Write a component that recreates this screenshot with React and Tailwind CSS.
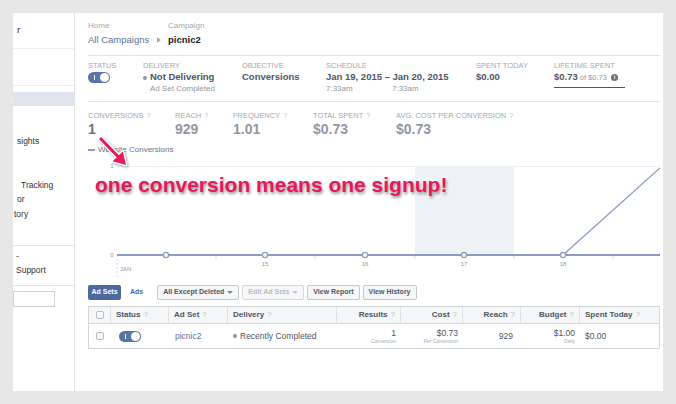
import React from "react";

function Toggle() {
  return (
    <div className="relative w-[22px] h-[11px] rounded-full bg-[#5b74a8]">
      <div className="absolute left-[6px] top-[3px] w-[1px] h-[5px] bg-white" />
      <div className="absolute right-[1px] top-[1px] w-[9px] h-[9px] rounded-full bg-white" />
    </div>
  );
}

function Q() {
  return <span className="text-[#bcc0c7] font-normal ml-[3px]">?</span>;
}

function Label({ children }) {
  return <div className="text-[7.5px] leading-[10px] text-[#a4a9b3] whitespace-nowrap">{children}</div>;
}

function Sidebar() {
  return (
    <div className="w-[62px] shrink-0 border-r border-[#e3e3e3] flex flex-col text-[8.5px] text-[#333] overflow-hidden">
      <div className="h-[36px] flex items-center pl-[4px] border-b border-[#eeeeee] text-[9.5px]">r</div>
      <div className="h-[37px] border-b border-[#eeeeee]" />
      <div className="mt-[6px] h-[14px] bg-[#dfe4ee]" />
      <div className="mt-[29px] leading-[12px] pl-[4px]">sights</div>
      <div className="mt-[32px] leading-[12px] pl-[8px]">Tracking</div>
      <div className="mt-[2px] leading-[12px] pl-[4px]">or</div>
      <div className="mt-[3px] leading-[12px] pl-[1px]">tory</div>
      <div className="mt-[25px] border-t border-[#e5e5e5]" />
      <div className="mt-[4px] leading-[12px] pl-[3px]">-</div>
      <div className="mt-[2px] leading-[12px] pl-[3px]">Support</div>
      <div className="mt-[9px] border-t border-[#e5e5e5]" />
      <div className="mt-[5px] h-[16px] w-[42px] border border-[#cfd2d6] bg-white" />
    </div>
  );
}

function Chart() {
  const pts = [78, 177, 277, 376, 475];
  const ticks = [128, 227, 327, 426, 525];
  return (
    <svg width="572" height="120" className="block">
      <line x1="29" y1="8.5" x2="572" y2="8.5" stroke="#eceef1" strokeWidth="1" />
      <rect x="327" y="8" width="99" height="89" fill="#eef1f6" />
      <text x="24" y="10" fontSize="6" fill="#9197a3" textAnchor="middle" fontFamily="Liberation Sans, Arial, sans-serif">1</text>
      <text x="24" y="99" fontSize="6" fill="#9197a3" textAnchor="middle" fontFamily="Liberation Sans, Arial, sans-serif">0</text>
      {ticks.map((t) => (
        <line key={t} x1={t} y1="97" x2={t} y2="101" stroke="#d5d9e0" strokeWidth="1" />
      ))}
      <line x1="29" y1="97" x2="29" y2="120" stroke="#d5d9e0" strokeWidth="1" strokeDasharray="2 2" />
      <line x1="29" y1="97" x2="572" y2="97" stroke="#8b9dc3" strokeWidth="2" />
      <line x1="475" y1="97" x2="572" y2="10" stroke="#8b9dc3" strokeWidth="1.3" />
      {pts.map((p) => (
        <circle key={p} cx={p} cy="97" r="2.6" fill="white" stroke="#8b9dc3" strokeWidth="1.3" />
      ))}
      {[["15", 177], ["16", 277], ["17", 376], ["18", 475]].map(([l, x]) => (
        <text key={l} x={x} y="108" fontSize="6" fill="#9197a3" textAnchor="middle" fontFamily="Liberation Sans, Arial, sans-serif">{l}</text>
      ))}
      <text x="32" y="113" fontSize="6" fill="#9197a3" fontFamily="Liberation Sans, Arial, sans-serif">JAN</text>
    </svg>
  );
}

function Btn({ children, disabled }) {
  return (
    <div
      className={
        disabled
          ? "h-[15px] px-[5px] flex items-center border border-[#d6d8dc] bg-[#f6f7f8] rounded-[2px] text-[7px] font-bold text-[#b9bcc2] whitespace-nowrap"
          : "h-[15px] px-[5px] flex items-center border border-[#c4c7cc] bg-[#f6f7f8] rounded-[2px] text-[7px] font-bold text-[#4e5665] whitespace-nowrap"
      }
    >
      {children}
    </div>
  );
}

function Caret({ light }) {
  return (
    <span className={light ? "ml-[3px] inline-block w-0 h-0 border-l-[3px] border-r-[3px] border-t-[3px] border-l-transparent border-r-transparent border-t-[#c5c8cd]" : "ml-[3px] inline-block w-0 h-0 border-l-[3px] border-r-[3px] border-t-[3px] border-l-transparent border-r-transparent border-t-[#7f8590]"} />
  );
}

function Table() {
  const head = "h-[16px] flex items-center px-[5px] border-r border-[#dddfe2] text-[8px] font-bold text-[#4e5665] whitespace-nowrap";
  const cell = "h-[24px] flex items-center px-[5px] text-[8.5px] text-[#4e5665] whitespace-nowrap";
  return (
    <div className="mt-[6px] border border-[#d3d6db]">
      <div className="grid grid-cols-[22px_58px_59px_109px_64px_62px_58px_59px_1fr] bg-[#f6f7f8] border-b border-[#d3d6db]">
        <div className={head + " justify-center"}>
          <div className="w-[8px] h-[8px] rounded-[2px] border border-[#b9bcc2] bg-white" />
        </div>
        <div className={head}>Status<Q /></div>
        <div className={head}>Ad Set<Q /></div>
        <div className={head}>Delivery<Q /></div>
        <div className={head + " justify-end"}>Results<Q /></div>
        <div className={head + " justify-end"}>Cost<Q /></div>
        <div className={head + " justify-end"}>Reach<Q /></div>
        <div className={head + " justify-end"}>Budget<Q /></div>
        <div className={head + " border-r-0"}>Spent Today<Q /></div>
      </div>
      <div className="grid grid-cols-[22px_58px_59px_109px_64px_62px_58px_59px_1fr] bg-white">
        <div className={cell + " justify-center"}>
          <div className="w-[8px] h-[8px] rounded-[2px] border border-[#b9bcc2] bg-[#f1f2f4]" />
        </div>
        <div className={cell + " pl-[8px]"}><Toggle /></div>
        <div className={cell + " pl-[6px] text-[#5b6f9c]"}>picnic2</div>
        <div className={cell}>
          <span className="w-[4px] h-[4px] rounded-full bg-[#90949c] mr-[3px]" />
          Recently Completed
        </div>
        <div className={cell + " flex-col items-end justify-center"}>
          <div className="leading-[10px]">1</div>
          <div className="text-[5px] leading-[7px] text-[#a4a9b3]">Conversion</div>
        </div>
        <div className={cell + " flex-col items-end justify-center"}>
          <div className="leading-[10px]">$0.73</div>
          <div className="text-[5px] leading-[7px] text-[#a4a9b3]">Per Conversion</div>
        </div>
        <div className={cell + " justify-end pr-[8px]"}>929</div>
        <div className={cell + " flex-col items-end justify-center"}>
          <div className="leading-[10px]">$1.00</div>
          <div className="text-[5px] leading-[7px] text-[#a4a9b3]">Daily</div>
        </div>
        <div className={cell}>$0.00</div>
      </div>
    </div>
  );
}

export default function App() {
  return (
    <div className="w-[676px] h-[404px] bg-[#e7e7e7] pt-[13px] pl-[13px] font-['Liberation_Sans',Arial,sans-serif]">
      <div className="w-[650px] h-[378px] bg-white flex">
        <Sidebar />
        <div className="relative flex-1 pl-[13px] pr-[3px] flex flex-col">
          {/* breadcrumb */}
          <div className="pt-[7px] pb-[8px] border-b border-[#e5e5e5]">
            <div className="flex text-[8px] leading-[12px] text-[#a4a9b3]">
              <div className="w-[80px]">Home</div>
              <div>Campaign</div>
            </div>
            <div className="flex items-center text-[9.5px] leading-[15px]">
              <div className="w-[69px] text-[#5b6f9c]">All Campaigns</div>
              <div className="w-[11px] flex items-center">
                <span className="inline-block w-0 h-0 border-t-[3px] border-b-[3px] border-l-[4px] border-t-transparent border-b-transparent border-l-[#a4a9b3]" />
              </div>
              <div className="font-bold text-[#1d2129]">picnic2</div>
            </div>
          </div>

          {/* status row */}
          <div className="flex pt-[5px] pb-[7px] border-b border-[#e5e5e5]">
            <div className="w-[55px]">
              <Label>STATUS</Label>
              <div className="h-[13px] flex items-center"><Toggle /></div>
            </div>
            <div className="w-[99px]">
              <Label>DELIVERY</Label>
              <div className="h-[13px] flex items-center text-[9.5px] font-bold text-[#4e5665] whitespace-nowrap">
                <span className="w-[4px] h-[4px] rounded-full bg-[#90949c] mr-[3px]" />
                Not Delivering
              </div>
              <div className="text-[8px] leading-[10px] text-[#9197a3] pl-[7px] whitespace-nowrap">Ad Set Completed</div>
            </div>
            <div className="w-[84px]">
              <Label>OBJECTIVE</Label>
              <div className="h-[13px] flex items-center text-[9.5px] font-bold text-[#4e5665]">Conversions</div>
            </div>
            <div className="w-[150px]">
              <Label>SCHEDULE</Label>
              <div className="h-[13px] flex items-center text-[9.5px] font-bold text-[#4e5665] whitespace-nowrap">Jan 19, 2015 – Jan 20, 2015</div>
              <div className="flex text-[8px] leading-[10px] text-[#9197a3]">
                <div className="w-[66px]">7:33am</div>
                <div>7:33am</div>
              </div>
            </div>
            <div className="w-[78px]">
              <Label>SPENT TODAY</Label>
              <div className="h-[13px] flex items-center text-[9.5px] font-bold text-[#4e5665]">$0.00</div>
            </div>
            <div>
              <Label>LIFETIME SPENT</Label>
              <div className="w-[71px] h-[13px] flex items-center whitespace-nowrap">
                <span className="text-[9.5px] font-bold text-[#4e5665]">$0.73</span>
                <span className="text-[7.5px] text-[#9197a3] ml-[2px]">of $0.73</span>
                <span className="ml-[4px] w-[7px] h-[7px] rounded-full bg-[#6b7079] text-white text-[5.5px] font-bold flex items-center justify-center leading-none">i</span>
              </div>
              <div className="w-[71px] mt-[3px] border-b-[1.5px] border-[#4e5665]" />
            </div>
          </div>

          {/* conversion stats */}
          <div className="flex pt-[9px]">
            <div className="w-[87px]">
              <Label>CONVERSIONS<Q /></Label>
              <div className="text-[14px] leading-[17px] font-bold text-[#6d7380]">1</div>
            </div>
            <div className="w-[58px]">
              <Label>REACH<Q /></Label>
              <div className="text-[14px] leading-[17px] font-bold text-[#9197a3]">929</div>
            </div>
            <div className="w-[80px]">
              <Label>FREQUENCY<Q /></Label>
              <div className="text-[14px] leading-[17px] font-bold text-[#9197a3]">1.01</div>
            </div>
            <div className="w-[83px]">
              <Label>TOTAL SPENT<Q /></Label>
              <div className="text-[14px] leading-[17px] font-bold text-[#9197a3]">$0.73</div>
            </div>
            <div>
              <Label>AVG. COST PER CONVERSION<Q /></Label>
              <div className="text-[14px] leading-[17px] font-bold text-[#9197a3]">$0.73</div>
            </div>
          </div>
          <div className="mt-[7px] flex items-center h-[10px]">
            <div className="w-[7px] h-[2px] bg-[#8b9dc3] mr-[3px]" />
            <div className="text-[8px] text-[#6d7380]">Website Conversions</div>
          </div>

          {/* chart */}
          <div className="relative mt-[3px]">
            <Chart />
            <div className="absolute left-[7px] top-[15px] text-[21px] leading-[24px] font-bold text-[#e8185c] whitespace-nowrap [-webkit-text-stroke:3px_white] [paint-order:stroke_fill] [text-shadow:1px_2px_3px_rgba(0,0,0,0.45)]">
              one conversion means one signup!
            </div>
          </div>

          {/* arrow */}
          <svg className="absolute left-[20px] top-[119px]" width="40" height="40">
            <g style={{ filter: "drop-shadow(1px 1px 1px rgba(0,0,0,0.35))" }}>
              <line x1="6" y1="7" x2="23" y2="24.5" stroke="white" strokeWidth="6" strokeLinecap="round" />
              <polygon points="31,33 17.6,29.3 27.8,19.5" fill="white" stroke="white" strokeWidth="3" strokeLinejoin="round" />
              <line x1="6" y1="7" x2="23" y2="24.5" stroke="#e8185c" strokeWidth="3.2" strokeLinecap="round" />
              <polygon points="31,33 17.6,29.3 27.8,19.5" fill="#e8185c" />
            </g>
          </svg>

          {/* toolbar */}
          <div className="mt-[6px] flex items-center h-[16px]">
            <div className="h-[15px] w-[33px] flex items-center justify-center rounded-[2px] bg-[#4e69a2] text-white text-[7px] font-bold">Ad Sets</div>
            <div className="ml-[9px] text-[7px] font-bold text-[#4e69a2]">Ads</div>
            <div className="ml-[14px] flex gap-[3px]">
              <Btn>All Except Deleted<Caret /></Btn>
              <Btn disabled>Edit Ad Sets<Caret light /></Btn>
              <Btn>View Report</Btn>
              <Btn>View History</Btn>
            </div>
          </div>

          <Table />
        </div>
      </div>
    </div>
  );
}
